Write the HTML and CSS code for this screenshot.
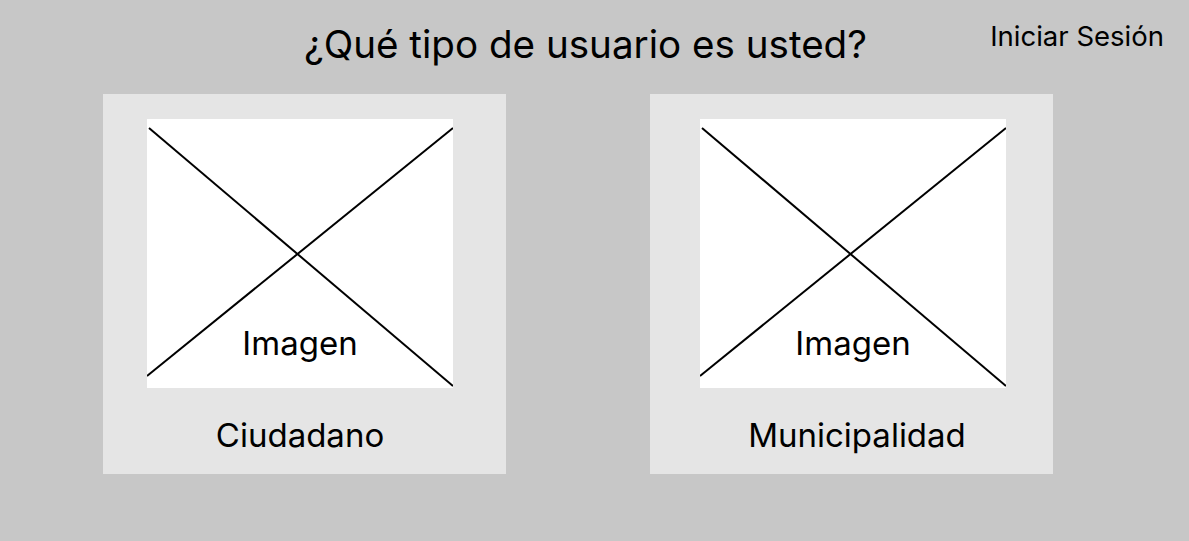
FILE: index.html
```html
<!DOCTYPE html>
<html lang="es">
<head>
    <meta charset="UTF-8">
    <meta name="viewport" content="width=device-width, initial-scale=1.0">
    <title>Tipo de usuario</title>
    <link rel="stylesheet" href="styles.css">
</head>
<body>
<div class="page">
    <header class="header">
        <h1 class="title">¿Qué tipo de usuario es usted?</h1>
        <a class="login" href="#">Iniciar Sesión</a>
    </header>
    <div class="cards">
        <a class="card card-citizen" href="#">
            <div class="card-body">
                <div class="placeholder">
                    <svg class="cross" viewBox="0 0 306 269" preserveAspectRatio="none">
                        <line x1="2" y1="9" x2="306" y2="267"/>
                        <line x1="0" y1="257" x2="306" y2="9"/>
                    </svg>
                    <span class="placeholder-text">Imagen</span>
                </div>
                <span class="card-label">Ciudadano</span>
            </div>
        </a>
        <a class="card card-city" href="#">
            <div class="card-body">
                <div class="placeholder">
                    <svg class="cross" viewBox="0 0 306 269" preserveAspectRatio="none">
                        <line x1="2" y1="9" x2="306" y2="267"/>
                        <line x1="0" y1="257" x2="306" y2="9"/>
                    </svg>
                    <span class="placeholder-text">Imagen</span>
                </div>
                <span class="card-label label-wide">Municipalidad</span>
            </div>
        </a>
    </div>
</div>
</body>
</html>
```

FILE: styles.css
```css
body {
    margin: 0;
    padding: 0;
    background-color: #c7c7c7;
    font-family: Inter, "Noto Sans", Arial, sans-serif;
    color: #000;
}
.page {
    height: 541px;
    box-sizing: border-box;
    padding-top: 21px;
}
.header {
    display: flex;
    align-items: flex-start;
}
.title {
    margin: 0 0 0 304px;
    font-size: 38.6px;
    font-weight: 400;
    line-height: 46px;
}
.login {
    margin-left: auto;
    margin-right: 25px;
    margin-top: -1px;
    font-size: 27.5px;
    line-height: 33px;
    color: #000;
    text-decoration: none;
}
.cards {
    display: flex;
    gap: 144px;
    padding-left: 103px;
    margin-top: 27px;
}
.card {
    width: 403px;
    height: 380px;
    box-sizing: border-box;
    padding-top: 25px;
    background-color: #e5e5e5;
    display: flex;
    color: #000;
    text-decoration: none;
}
.card-citizen {
    padding-left: 44px;
}
.card-city {
    padding-left: 50px;
}
.card-body {
    width: 306px;
    display: flex;
    flex-direction: column;
    align-items: center;
}
.placeholder {
    position: relative;
    width: 306px;
    height: 269px;
    box-sizing: border-box;
    padding-top: 204px;
    background: #fff;
    text-align: center;
}
.cross {
    position: absolute;
    left: 0;
    top: 0;
    width: 100%;
    height: 100%;
}
.cross line {
    stroke: #000;
    stroke-width: 2;
}
.placeholder-text {
    position: relative;
    font-size: 33px;
    line-height: 40px;
}
.card-label {
    margin-top: 27px;
    font-size: 33px;
    line-height: 40px;
}
.label-wide {
    margin-left: 8px;
}
```
